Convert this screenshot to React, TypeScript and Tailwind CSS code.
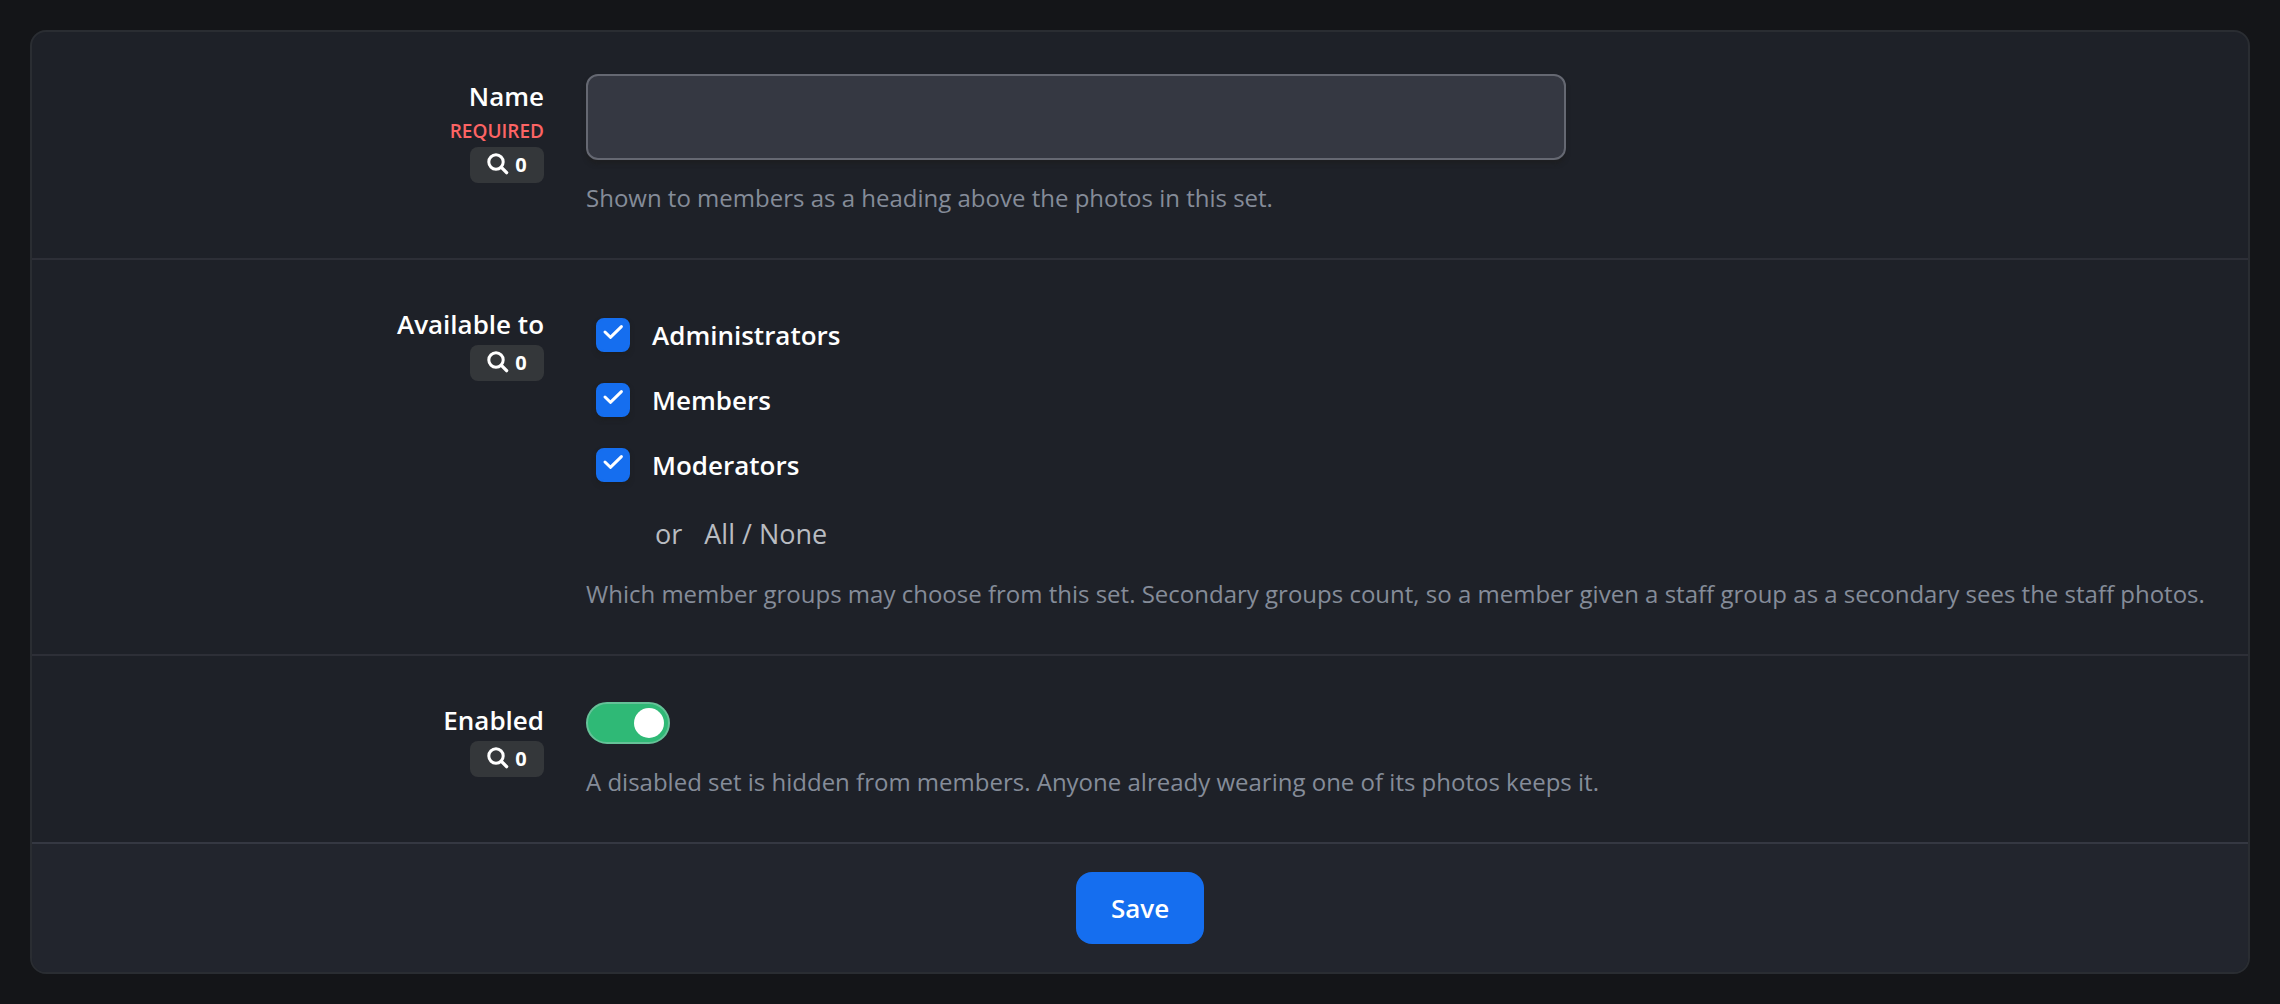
import { useState, type ReactNode } from 'react';

const groups = ['Administrators', 'Members', 'Moderators'];

function UsageBadge() {
  return (
    <button
      type="button"
      aria-label="0 search results"
      className="mt-px flex h-9 w-[74px] items-center justify-center gap-1.5 rounded-lg bg-[#34373a] text-xl leading-8 font-bold text-white"
    >
      <svg viewBox="0 0 22 22" className="-mt-0.5 size-[22px]" fill="none" stroke="currentColor" strokeLinecap="round" aria-hidden="true">
        <circle cx="9" cy="9" r="7.2" strokeWidth="3" />
        <path d="M14.4 14.4 19.6 19.6" strokeWidth="3.4" />
      </svg>
      <span>0</span>
    </button>
  );
}

type RowProps = {
  label: string;
  htmlFor?: string;
  labelId?: string;
  required?: boolean;
  help: string;
  children: ReactNode;
};

function Row({ label, htmlFor, labelId, required, help, children }: RowProps) {
  return (
    <div className="grid grid-cols-[25%_1fr] border-b-2 border-[#2d2f37] last:border-b-0">
      <div className="flex flex-col items-end pt-11 pr-[42px] text-right">
        <label id={labelId} htmlFor={htmlFor} className="text-[26px] leading-10 font-semibold text-white">
          {label}
        </label>
        {required && <span className="text-[19px] leading-[30px] font-semibold text-[#fc6464] uppercase">Required</span>}
        <UsageBadge />
      </div>
      <div className="py-[42px]">
        {children}
        <p className="mt-5 text-2xl leading-9 text-[#858c99]">{help}</p>
      </div>
    </div>
  );
}

export default function App() {
  const [name, setName] = useState('');
  const [selected, setSelected] = useState<string[]>(groups);
  const [enabled, setEnabled] = useState(true);

  const toggle = (group: string) =>
    setSelected((current) => (current.includes(group) ? current.filter((g) => g !== group) : [...current, group]));

  return (
    <main className="min-h-screen bg-[#141518] p-[30px] font-['Open_Sans',sans-serif]">
      <form
        onSubmit={(e) => e.preventDefault()}
        className="overflow-hidden rounded-2xl border-2 border-[#2a2d32] bg-[#1e2128]"
      >
        <div>
          <Row label="Name" htmlFor="name" required help="Shown to members as a heading above the photos in this set.">
            <input
              id="name"
              type="text"
              value={name}
              onChange={(e) => setName(e.target.value)}
              className="block h-[86px] w-full max-w-[980px] rounded-xl border-2 border-[#656872] bg-[#353842] px-6 text-[26px] text-white shadow-[0_4px_4px_rgba(28,28,28,0.6)] outline-none"
            />
          </Row>

          <Row
            label="Available to"
            labelId="available-label"
            help="Which member groups may choose from this set. Secondary groups count, so a member given a staff group as a secondary sees the staff photos."
          >
            <div role="group" aria-labelledby="available-label" className="pl-2.5">
              {groups.map((group) => (
                <label key={group} className="flex h-[65px] items-center gap-[22px] text-[26px] font-semibold text-white">
                  <span className="relative size-[34px]">
                    <input
                      type="checkbox"
                      checked={selected.includes(group)}
                      onChange={() => toggle(group)}
                      className="peer block size-[34px] appearance-none rounded-lg border-2 border-[#656872] bg-[#353842] shadow-[0_3px_4px_rgba(28,28,28,0.6)] checked:border-[#156eef] checked:bg-[#156eef]"
                    />
                    <svg
                      viewBox="0 0 34 34"
                      className="pointer-events-none absolute inset-0 hidden peer-checked:block"
                      fill="none"
                      stroke="white"
                      strokeWidth="3"
                      strokeLinecap="round"
                      strokeLinejoin="round"
                      aria-hidden="true"
                    >
                      <path d="M9 14 14.4 19.3 25.4 8.6" />
                    </svg>
                  </span>
                  <span className="pt-0.5">{group}</span>
                </label>
              ))}
              <div className="mt-[15px] flex gap-[22px] pl-[59px] text-[27px] leading-[44px] text-[#b9bcc1]">
                <span>or</span>
                <span>
                  <button type="button" onClick={() => setSelected(groups)}>All</button>
                  {' / '}
                  <button type="button" onClick={() => setSelected([])}>None</button>
                </span>
              </div>
            </div>
          </Row>

          <Row
            label="Enabled"
            htmlFor="enabled"
            help="A disabled set is hidden from members. Anyone already wearing one of its photos keeps it."
          >
            <input
              id="enabled"
              type="checkbox"
              role="switch"
              checked={enabled}
              onChange={(e) => setEnabled(e.target.checked)}
              className="mt-1 flex h-[42px] w-[84px] appearance-none items-center rounded-full border-2 border-[#656872] bg-[#353842] px-1 before:size-[30px] before:rounded-full before:bg-white before:content-[''] checked:justify-end checked:border-[#65c298] checked:bg-[#2fb976]"
            />
          </Row>
        </div>

        <footer className="flex justify-center border-t-2 border-[#353842] bg-[#22252d] py-7">
          <button type="submit" className="h-[72px] rounded-2xl bg-[#156eef] px-[35px] text-[26px] font-semibold text-white">
            Save
          </button>
        </footer>
      </form>
    </main>
  );
}
